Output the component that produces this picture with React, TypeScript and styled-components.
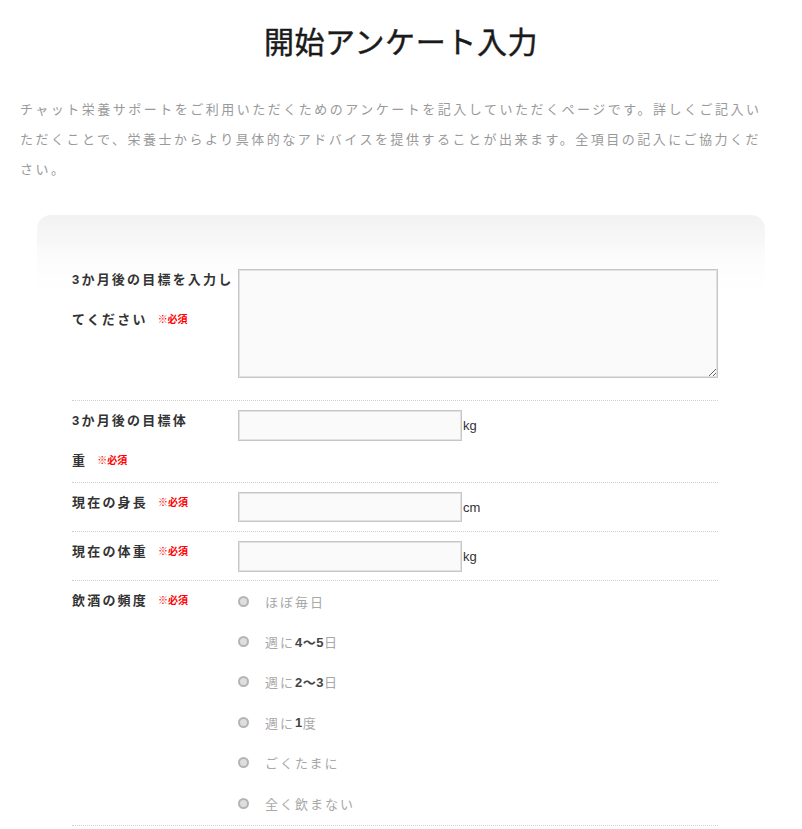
import React from "react";
import styled, { createGlobalStyle } from "styled-components";

const GlobalStyle = createGlobalStyle`
  html, body {
    margin: 0;
    padding: 0;
    background: #ffffff;
  }
  body {
    font-family: "Liberation Sans", "Noto Sans CJK JP", sans-serif;
    color: #333;
  }
  * { box-sizing: border-box; }
`;

const Page = styled.div`
  padding: 20px 20px 40px;
`;

const Title = styled.h1`
  margin: 0;
  text-align: center;
  font-family: "Noto Sans CJK JP", sans-serif;
  font-size: 30px;
  line-height: 40px;
  font-weight: 400;
  color: #1a1a1a;
  -webkit-text-stroke: 0.45px #1a1a1a;
  letter-spacing: 0.6px;
`;

const Intro = styled.p`
  margin: 35px 8px 30px 0;
  font-size: 13px;
  line-height: 30px;
  letter-spacing: 2.5px;
  color: #999;
`;

const Card = styled.section`
  position: relative;
  margin: 0 17px;
  padding: 45px 47px 0 35px;

  &::before {
    content: "";
    position: absolute;
    inset: 0;
    border-radius: 14px;
    background: linear-gradient(#f2f2f2 0px, #fbfbfb 45px, #ffffff 90px);
    box-shadow: 0 0 3px rgba(0, 0, 0, 0.22);
    -webkit-mask-image: linear-gradient(#000 0px, #000 25px, transparent 95px);
    mask-image: linear-gradient(#000 0px, #000 25px, transparent 95px);
    z-index: 0;
  }
`;

const Form = styled.div`
  position: relative;
  z-index: 1;
`;

const Row = styled.div`
  display: grid;
  grid-template-columns: 166px 1fr;
  align-items: start;
  border-bottom: 1px dotted #cfcfcf;
`;

const LabelCell = styled.div<{ $padBottom?: number }>`
  font-size: 13px;
  font-weight: bold;
  line-height: 40px;
  letter-spacing: 2.2px;
  color: #333;
  padding-bottom: ${(p) => p.$padBottom ?? 0}px;
`;

const NoWrap = styled.span`
  white-space: nowrap;
`;

const Required = styled.span`
  margin-left: 10px;
  font-size: 10px;
  font-weight: bold;
  letter-spacing: 0;
  color: #ff0000;
  vertical-align: 1px;
`;

const FieldCell = styled.div<{ $top?: number; $bottom?: number }>`
  display: flex;
  align-items: center;
  padding: ${(p) => p.$top ?? 9}px 0 ${(p) => p.$bottom ?? 9}px;
`;

const TextArea = styled.textarea`
  display: block;
  width: 480px;
  height: 109px;
  margin: 0;
  border: 1px solid #c6c6c6;
  box-shadow: inset 0 0 0 1px #e2e2e2;
  background: #fafafa;
  font-family: inherit;
  font-size: 13px;
`;

const TextInput = styled.input<{ $h: number }>`
  width: 224px;
  height: ${(p) => p.$h}px;
  margin: 0;
  border: 1px solid #c6c6c6;
  box-shadow: inset 0 0 0 1px #e2e2e2;
  background: #fafafa;
  font-family: inherit;
  font-size: 13px;
`;

const Unit = styled.span`
  margin-left: 1px;
  font-size: 13px;
  color: #333;
`;

const RadioList = styled.div`
  display: flex;
  flex-direction: column;
  padding-bottom: 2px;
`;

const RadioItem = styled.label`
  display: flex;
  align-items: center;
  height: 40.4px;
  font-size: 13px;
  letter-spacing: 2px;
  color: #a8a8a8;
`;

const RadioDot = styled.span`
  flex: none;
  width: 11px;
  height: 11px;
  margin-right: 16px;
  border-radius: 50%;
  border: 2px solid #b4b4b4;
  background: #dedede;
`;

const Num = styled.span`
  color: #444;
  font-weight: bold;
  letter-spacing: 0.5px;
`;

function Label({ text, pad }: { text: string; pad?: number }) {
  const head = text.slice(0, -1);
  const last = text.slice(-1);
  return (
    <LabelCell $padBottom={pad}>
      {head}
      <NoWrap>
        {last}
        <Required>※必須</Required>
      </NoWrap>
    </LabelCell>
  );
}

const radios: React.ReactNode[] = [
  <>ほぼ毎日</>,
  <>
    週に<Num>4～5</Num>日
  </>,
  <>
    週に<Num>2～3</Num>日
  </>,
  <>
    週に<Num>1</Num>度
  </>,
  <>ごくたまに</>,
  <>全く飲まない</>,
];

export default function App() {
  return (
    <>
      <GlobalStyle />
      <Page>
        <Title>開始アンケート入力</Title>
        <Intro>
          チャット栄養サポートをご利用いただくためのアンケートを記入していただくページです。詳しくご記入いただくことで、栄養士からより具体的なアドバイスを提供することが出来ます。全項目の記入にご協力ください。
        </Intro>
        <Card>
          <Form>
            <Row>
              <Label text="3か月後の目標を入力してください" />
              <FieldCell $top={9} $bottom={22}>
                <TextArea />
              </FieldCell>
            </Row>
            <Row>
              <Label text="3か月後の目標体重" pad={1} />
              <FieldCell $top={9} $bottom={9}>
                <TextInput $h={31} />
                <Unit>kg</Unit>
              </FieldCell>
            </Row>
            <Row>
              <Label text="現在の身長" />
              <FieldCell $top={9} $bottom={9}>
                <TextInput $h={30} />
                <Unit>cm</Unit>
              </FieldCell>
            </Row>
            <Row>
              <Label text="現在の体重" />
              <FieldCell $top={9} $bottom={8}>
                <TextInput $h={31} />
                <Unit>kg</Unit>
              </FieldCell>
            </Row>
            <Row>
              <Label text="飲酒の頻度" />
              <RadioList>
                {radios.map((r, i) => (
                  <RadioItem key={i}>
                    <RadioDot />
                    {r}
                  </RadioItem>
                ))}
              </RadioList>
            </Row>
          </Form>
        </Card>
      </Page>
    </>
  );
}
